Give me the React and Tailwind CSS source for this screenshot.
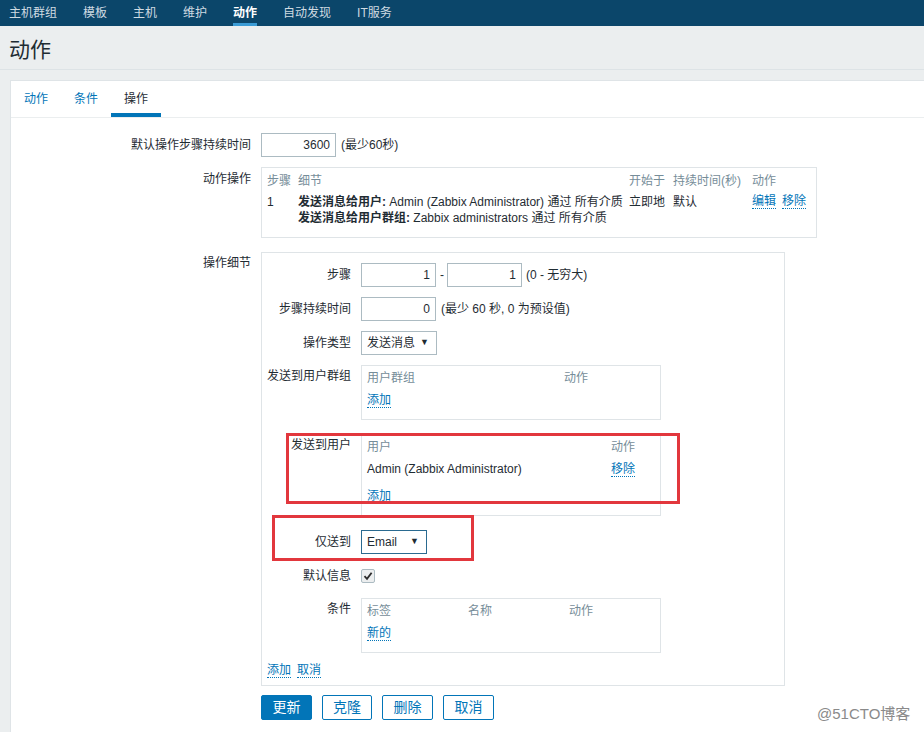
import React from 'react';

const navItems = ['主机群组', '模板', '主机', '维护', '动作', '自动发现', 'IT服务'];

function Link({ children }) {
  return (
    <span className="text-[#0275b8] border-b border-dotted border-[#0275b8] leading-[14px]">{children}</span>
  );
}

function Input({ value, w = 'w-[75px]' }) {
  return (
    <div className={`${w} h-6 border border-[#acbbc2] bg-white flex items-center justify-end pr-[5px]`}>
      {value}
    </div>
  );
}

function Select({ text, w, focus }) {
  return (
    <div
      className={`${w} h-6 border ${focus ? 'border-[#2a6a90]' : 'border-[#acbbc2]'} bg-white flex items-center justify-between pl-[5px] pr-[7px]`}
    >
      <span>{text}</span>
      <span className="text-[9px]">▼</span>
    </div>
  );
}

function Row({ label, children, mt = 'mt-[10px]', top }) {
  return (
    <div className={`flex ${mt} ${top ? 'items-start' : 'items-center'}`}>
      <div className={`w-[89px] shrink-0 text-right leading-4 ${top ? 'pt-[3px]' : ''}`}>{label}</div>
      <div className="ml-[10px] flex items-center">{children}</div>
    </div>
  );
}

export default function App() {
  return (
    <div className="relative min-h-[732px] bg-[#ebeeef] text-[12px] text-[#1f2c33] font-['Liberation_Sans','Noto_Sans_CJK_SC',sans-serif] overflow-hidden">
      {/* top navigation */}
      <nav className="h-[26px] bg-[#0b466a] flex pl-[9px] gap-[26px]">
        {navItems.map((item) => (
          <span
            key={item}
            className={`h-full flex items-center leading-4 ${
              item === '动作'
                ? 'text-white font-bold border-b-[3px] border-[#3a9bd5] pt-[3px]'
                : 'text-[#cfdbe2]'
            }`}
          >
            {item}
          </span>
        ))}
      </nav>

      {/* page header */}
      <div className="h-[44px] border-b border-[#dde3e6] flex items-center pl-[9px]">
        <h1 className="text-[21px] leading-6 pt-[4px]">动作</h1>
      </div>

      {/* main panel */}
      <div className="ml-[10px] mt-[10px] bg-white border-l border-t border-[#dfe4e7] min-h-[660px]">
        <div className="flex h-[37px] border-b border-[#ebeeef]">
          <div className="w-[50px] flex items-center justify-center text-[#0275b8]">动作</div>
          <div className="w-[50px] flex items-center justify-center text-[#0275b8]">条件</div>
          <div className="w-[50px] flex items-center justify-center border-b-4 border-[#0275b8] pt-1">操作</div>
        </div>

        <div className="pt-[15px]">
          {/* default step duration */}
          <div className="flex items-center">
            <div className="w-[240px] text-right leading-4">默认操作步骤持续时间</div>
            <div className="ml-[10px] flex items-center">
              <Input value="3600" />
              <span className="ml-[5px]">(最少60秒)</span>
            </div>
          </div>

          {/* operations */}
          <div className="flex items-start mt-[10px]">
            <div className="w-[240px] text-right leading-4 pt-[4px]">动作操作</div>
            <div className="ml-[10px] w-[556px] h-[71px] border border-[#dfe4e7] pl-[5px] pt-[2px]">
              <div className="grid grid-cols-[31px_331px_44px_79px_1fr] h-[22px] items-center text-[#768d99]">
                <span>步骤</span>
                <span>细节</span>
                <span>开始于</span>
                <span>持续时间(秒)</span>
                <span>动作</span>
              </div>
              <div className="grid grid-cols-[31px_331px_44px_79px_1fr] mt-[2px] leading-4">
                <span>1</span>
                <div>
                  <div>
                    <b>发送消息给用户:</b> Admin (Zabbix Administrator) 通过 所有介质
                  </div>
                  <div>
                    <b>发送消息给用户群组:</b> Zabbix administrators 通过 所有介质
                  </div>
                </div>
                <span>立即地</span>
                <span>默认</span>
                <span className="flex gap-[6px] items-start">
                  <Link>编辑</Link>
                  <Link>移除</Link>
                </span>
              </div>
            </div>
          </div>

          {/* operation details */}
          <div className="flex items-start mt-[14px]">
            <div className="w-[240px] text-right leading-4 pt-[3px]">操作细节</div>
            <div className="ml-[10px] w-[524px] border border-[#dfe4e7] pt-[10px] pb-[7px]">
              <Row label="步骤" mt="mt-0">
                <Input value="1" />
                <span className="ml-[4px] mr-[3px]">-</span>
                <Input value="1" />
                <span className="ml-[4px]">(0 - 无穷大)</span>
              </Row>
              <Row label="步骤持续时间">
                <Input value="0" />
                <span className="ml-[5px]">(最少 60 秒, 0 为预设值)</span>
              </Row>
              <Row label="操作类型">
                <Select text="发送消息" w="w-[76px]" />
              </Row>
              <Row label="发送到用户群组" top>
                <div className="w-[300px] h-[55px] border border-[#dfe4e7] pl-[5px] pt-[1px]">
                  <div className="flex h-[22px] items-center text-[#768d99]">
                    <span className="w-[197px]">用户群组</span>
                    <span>动作</span>
                  </div>
                  <div className="flex h-[22px] items-center">
                    <Link>添加</Link>
                  </div>
                </div>
              </Row>
              <Row label="发送到用户" top mt="mt-[14px]">
                <div className="w-[300px] h-[82px] border border-[#dfe4e7] pl-[5px] pt-[1px]">
                  <div className="flex h-[22px] items-center text-[#768d99]">
                    <span className="w-[244px]">用户</span>
                    <span>动作</span>
                  </div>
                  <div className="flex h-[22px] items-center">
                    <span className="w-[244px]">Admin (Zabbix Administrator)</span>
                    <Link>移除</Link>
                  </div>
                  <div className="flex h-[22px] items-center mt-[5px]">
                    <Link>添加</Link>
                  </div>
                </div>
              </Row>
              <Row label="仅送到" mt="mt-[14px]">
                <Select text="Email" w="w-[66px]" focus />
              </Row>
              <Row label="默认信息">
                <div className="h-6 flex items-center">
                  <div className="w-[14px] h-[14px] border border-[#acbbc2] bg-[#eceeef] rounded-[2px] flex items-center justify-center">
                    <svg width="10" height="10" viewBox="0 0 10 10">
                      <path d="M1.5 5.2 L4 7.8 L8.6 1.8" fill="none" stroke="#2b2b2b" strokeWidth="1.8" />
                    </svg>
                  </div>
                </div>
              </Row>
              <Row label="条件" top>
                <div className="w-[300px] h-[55px] border border-[#dfe4e7] pl-[5px] pt-[1px]">
                  <div className="flex h-[22px] items-center text-[#768d99]">
                    <span className="w-[101px]">标签</span>
                    <span className="w-[101px]">名称</span>
                    <span>动作</span>
                  </div>
                  <div className="flex h-[22px] items-center">
                    <Link>新的</Link>
                  </div>
                </div>
              </Row>
              <div className="flex gap-[6px] pl-[5px] mt-[9px] h-4 items-center">
                <Link>添加</Link>
                <Link>取消</Link>
              </div>
            </div>
          </div>

          {/* buttons */}
          <div className="flex gap-[10px] ml-[250px] mt-[9px]">
            <button className="w-[51px] h-[25px] rounded-[2px] bg-[#0275b8] border border-[#0275b8] text-white text-[14px]">更新</button>
            <button className="w-[50px] h-[25px] rounded-[2px] bg-white border border-[#0275b8] text-[#0275b8] text-[14px]">克隆</button>
            <button className="w-[51px] h-[25px] rounded-[2px] bg-white border border-[#0275b8] text-[#0275b8] text-[14px]">删除</button>
            <button className="w-[51px] h-[25px] rounded-[2px] bg-white border border-[#0275b8] text-[#0275b8] text-[14px]">取消</button>
          </div>
        </div>
      </div>

      {/* annotation boxes */}
      <div className="absolute left-[286px] top-[433px] w-[394px] h-[71px] border-[3px] border-[#e2373d]" />
      <div className="absolute left-[272px] top-[515px] w-[202px] h-[46px] border-[3px] border-[#e2373d]" />

      {/* watermark */}
      <div className="absolute left-[817px] top-[704px] text-[15px] text-[#8a8a8a] leading-5">@51CTO博客</div>
    </div>
  );
}
